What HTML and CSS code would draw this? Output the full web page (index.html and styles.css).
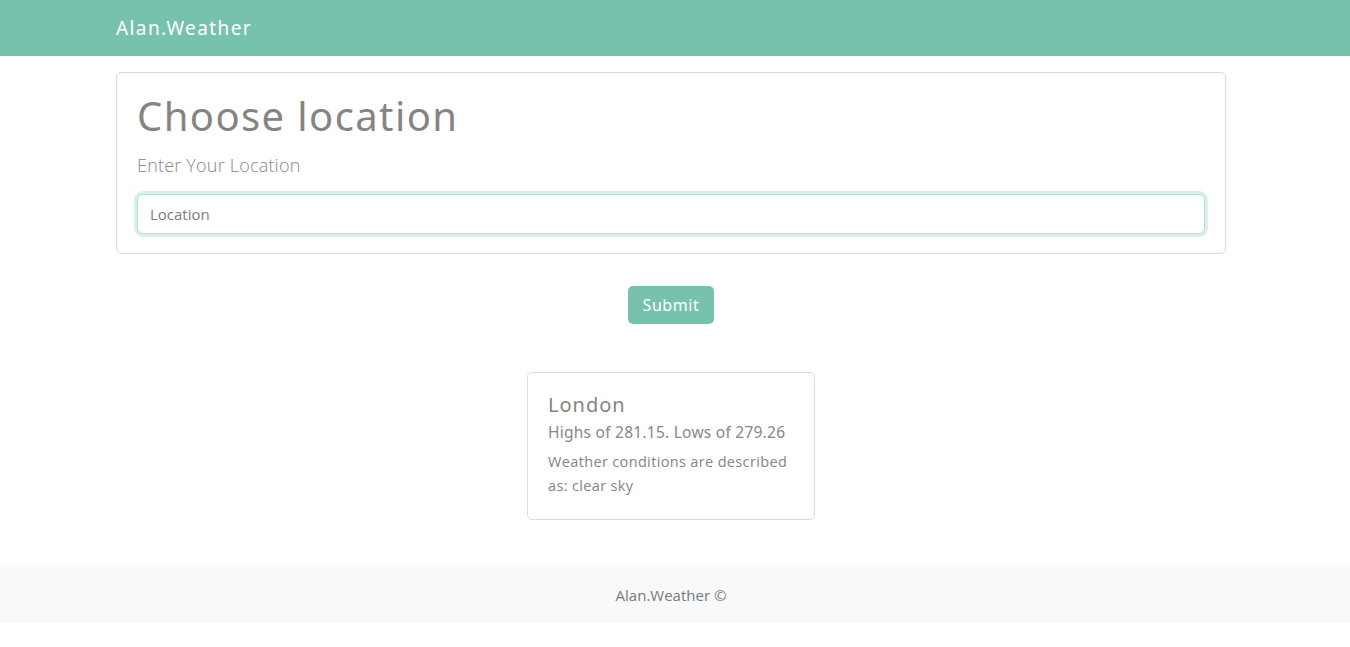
FILE: index.html
```html
<!DOCTYPE html>
<html lang="en">
<head>
<meta charset="utf-8">
<title>Alan.Weather</title>
<link rel="stylesheet" href="styles.css">
</head>
<body>
<nav class="navbar">
  <div class="container">
    <a class="brand" href="#">Alan.Weather</a>
  </div>
</nav>
<main class="container main">
  <form class="location-card">
    <h1 class="title">Choose location</h1>
    <label class="label" for="loc">Enter Your Location</label>
    <input id="loc" class="input" type="text" placeholder="Location" autofocus>
  </form>
  <div class="actions">
    <button class="btn" type="button">Submit</button>
  </div>
  <div class="results">
    <div class="result-card">
      <h2 class="city">London</h2>
      <p class="temps">Highs of 281.15. Lows of 279.26</p>
      <p class="desc">Weather conditions are described as: clear sky</p>
    </div>
  </div>
</main>
<footer class="footer">Alan.Weather ©</footer>
</body>
</html>
```

FILE: styles.css
```css
* { box-sizing: border-box; }
html, body { margin: 0; padding: 0; background: #fff; }
body { font-family: "Open Sans", "Noto Sans", sans-serif; color: #878481; }

.container { width: 1110px; margin-left: 116px; }

.navbar { background: #77c2ac; height: 56px; display: flex; align-items: center; }
.brand { font-family: "Noto Sans", sans-serif; font-size: 19px; color: #fff; text-decoration: none; letter-spacing: 1.4px; }

.main { padding-top: 16px; }

.location-card {
  border: 1px solid #dcdcdc;
  border-radius: 5px;
  padding: 20px 20px 19px;
  display: flex;
  flex-direction: column;
}
.title { font-family: "Noto Sans", sans-serif; font-weight: 400; font-size: 40px; line-height: 48px; margin: -1px 0 12px; color: #868481; letter-spacing: 1.4px; }
.label { font-family: "Open Sans", sans-serif; font-weight: 300; font-size: 18px; line-height: 26px; margin-bottom: 13px; color: #8a8784; letter-spacing: 0.2px; }
.input {
  height: 40px;
  border: 1px solid #b9e0d4;
  box-shadow: 0 0 0 3px #d9efe8;
  border-radius: 6px;
  padding: 0 12px;
  font-family: "Open Sans", sans-serif;
  font-size: 15px;
  color: #555;
  outline: none;
  margin: 3px 0 0;
}
.input::placeholder { color: #7d7d7d; }

.actions { display: flex; justify-content: center; margin-top: 32px; }
.btn {
  background: #77c2ac; color: #fff; border: 0; border-radius: 5px;
  width: 86px; height: 38px;
  font-family: "Noto Sans", sans-serif; font-size: 16px; letter-spacing: 0.6px;
}

.results { display: flex; justify-content: center; margin-top: 48px; padding-bottom: 47px; }
.result-card { width: 288px; border: 1px solid #dcdcdc; border-radius: 5px; padding: 20px 20px 21px; }
.city { font-family: "Noto Sans", sans-serif; font-weight: 400; font-size: 20px; line-height: 24px; margin: 0 0 4px; color: #868481; letter-spacing: 1px; }
.temps { font-family: "Noto Sans", sans-serif; font-size: 15.5px; line-height: 22px; margin: 0 0 7px; color: #8a8784; letter-spacing: 0.25px; }
.desc { font-size: 14.5px; line-height: 24px; margin: 0; color: #878481; letter-spacing: 0.35px; }

.footer { background: #f8f9fa; height: 56px; display: flex; align-items: center; justify-content: center; padding-right: 8px; font-size: 15px; color: #7a7a7a; }
```
